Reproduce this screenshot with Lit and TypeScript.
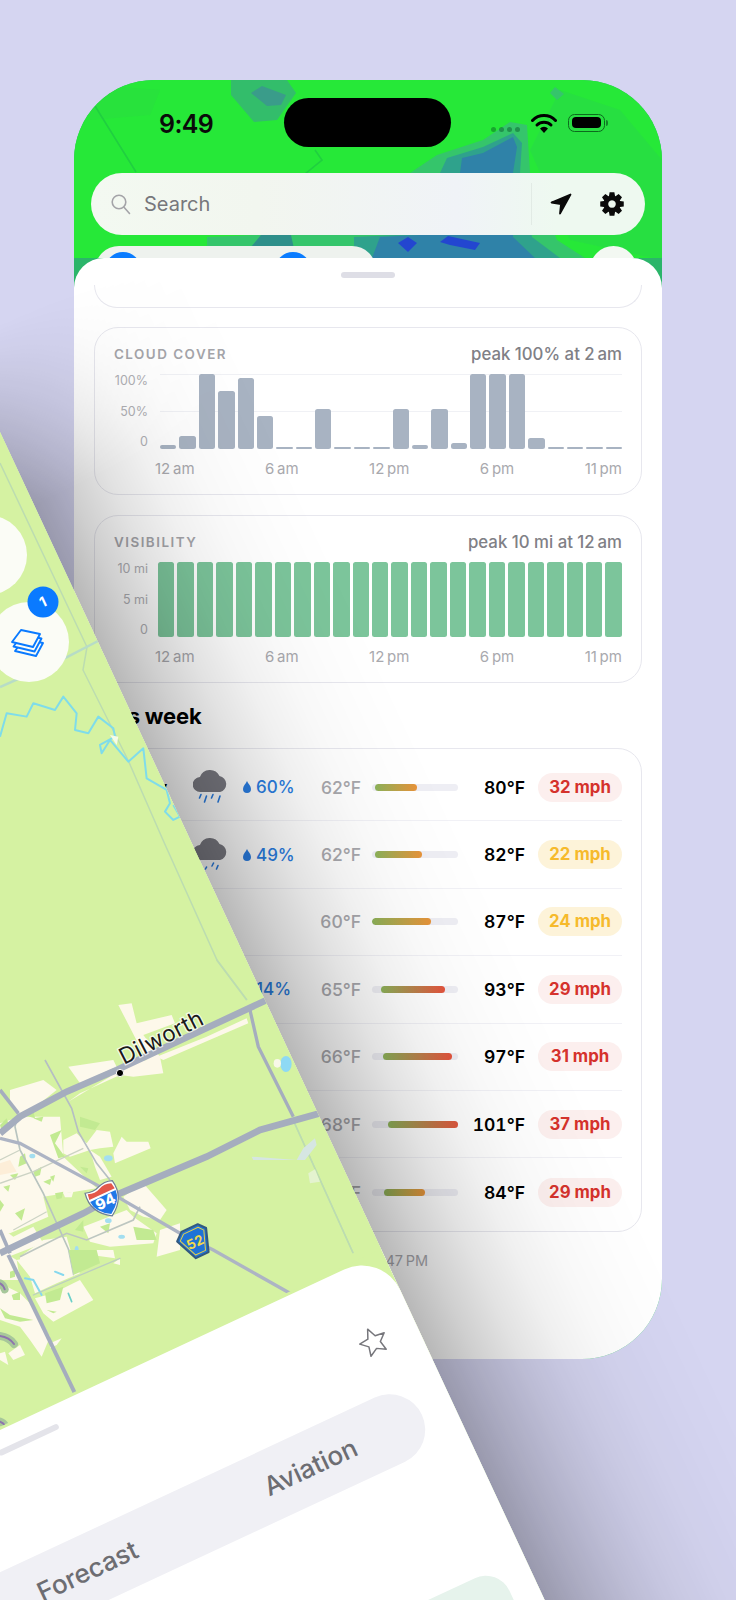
import { LitElement, html, css, svg } from "lit";
import { customElement } from "lit/decorators.js";

const cloudBars = [6, 17, 100, 78, 95, 44, 3, 3, 53, 3, 3, 3, 53, 6, 54, 8, 100, 100, 100, 15, 3, 3, 3, 3];
const week = [
  { day: "Today", rain: 4, pct: "60%", low: 62, high: 80, from: 3, to: 42, wind: 32, warn: false },
  { day: "Sat", rain: 3, pct: "49%", low: 62, high: 82, from: 3, to: 47, wind: 22, warn: true },
  { day: "Sun", rain: 0, pct: "", low: 60, high: 87, from: 0, to: 56, wind: 24, warn: true },
  { day: "Mon", rain: 2, pct: "14%", low: 65, high: 93, from: 9, to: 70, wind: 29, warn: false },
  { day: "Tue", rain: 0, pct: "", low: 66, high: 97, from: 11, to: 77, wind: 31, warn: false },
  { day: "Wed", rain: 0, pct: "", low: 68, high: 101, from: 16, to: 86, wind: 37, warn: false },
  { day: "Thu", rain: 0, pct: "", low: 65, high: 84, from: 12, to: 50, wind: 29, warn: false },
];
const hours = ["12\u202Fam", "6\u202Fam", "12\u202Fpm", "6\u202Fpm", "11\u202Fpm"];

function gearPath(): string {
  const c = 12;
  const pts: string[] = [];
  const teeth = 8;
  for (let i = 0; i < teeth; i++) {
    const a = (i / teeth) * Math.PI * 2;
    const w = 0.2;
    const p = [
      [a - 0.36, 8.6],
      [a - w, 12],
      [a + w, 12],
      [a + 0.36, 8.6],
    ];
    for (const [t, r] of p) pts.push(`${(c + Math.cos(t) * r).toFixed(2)} ${(c + Math.sin(t) * r).toFixed(2)}`);
  }
  return `M${pts.join("L")}Z M12 8.2a3.8 3.8 0 1 0 .01 0Z`;
}

const creamZ6 = [
  "355,135 395,130 410,190 515,165 525,190 430,225 480,290 490,340 400,350 360,345 240,400 205,425 330,350 345,320 440,300",
  "620,230 740,175 745,190 490,300 470,290",
];
const creamA = [
  "0,190 60,170 180,170 190,290 290,385 130,410 145,470 30,520 0,520",
  "30,90 130,60 170,90 120,130 60,170 30,130",
  "205,20 340,0 350,20 240,70",
  "190,240 230,220 260,250 290,210 330,215 340,260 300,265 270,270 210,290 190,280",
  "340,280 365,230 380,245 445,245 452,265 345,310",
  "270,270 300,290 335,350 300,360 285,320",
  "370,410 430,370 500,450 480,480 430,470 390,450",
  "250,500 380,450 400,470 470,520 460,550 330,560 270,545",
  "480,510 540,490 540,570 470,590",
  "60,590 130,540 200,530 220,600 60,600",
  "0,500 40,530 100,500 130,550 0,600",
  "190,400 220,395 215,412 195,412",
];
const greenA = [
  "45,460 75,445 65,482",
  "150,350 165,345 160,365",
  "240,320 265,325 260,340",
  "10,380 30,375 25,395",
  "225,510 250,480 250,515",
  "150,225 185,210 165,250 195,290 175,295",
  "240,170 300,190 285,210 240,200",
  "30,345 55,340 45,360",
  "130,365 155,355 150,375",
  "70,165 100,150 105,175",
  "300,500 330,490 325,520",
  "400,500 460,510 470,540 410,540",
  "60,290 75,280 80,310 55,320",
  "100,335 125,320 120,345 105,350",
  "0,195 20,175 25,190 5,215",
  "0,420 12,435 0,455",
  "165,400 190,395 185,415 170,418",
  "100,175 130,170 125,185",
];
const creamB = [
  "50,30 200,0 240,70 170,100 105,130 90,80",
  "105,145 160,130 220,100 240,90 280,150 160,215 130,190",
  "0,100 60,130 100,170 150,260 125,320 90,270 60,230 0,210",
  "25,310 60,285 75,315 40,330",
  "0,310 15,305 25,345 0,330",
  "280,0 340,0 345,25 275,15",
  "340,40 360,25 360,45",
  "150,280 185,265 170,285 150,295",
  "0,0 50,30 60,90 0,90",
];
const greenB = [
  "135,130 190,110 180,150 140,160",
  "35,135 60,125 60,150 40,150",
  "205,0 290,0 300,40 220,75",
  "0,175 30,195 100,210 60,215 15,205",
  "140,180 170,185 160,190",
  "30,65 45,60 45,80 30,85",
];
const hills = ["M0 100Q10 105 14 118", "M0 258Q28 262 42 282", "M0 515Q10 518 16 528"];

@customElement("app-root")
export class AppRoot extends LitElement {
  static styles = css`
    :host { display: block; width: 736px; height: 1600px; }
    * { box-sizing: border-box; }
    .scene {
      position: relative; width: 736px; height: 1600px; overflow: hidden;
      background: #d5d5f1; padding: 80px 0 0 74px;
      font-family: Inter, "Noto Sans", sans-serif;
    }
    .back {
      position: relative; width: 588px; height: 1279px; border-radius: 80px; overflow: hidden;
      background: #2bb56a; display: flex; flex-direction: column;
    }
    .top { position: relative; height: 178px; flex: none; overflow: hidden; background: #26e838; }
    .radar { position: absolute; left: 0; top: 0; }
    .status {
      position: relative; height: 93px; padding: 18px 0 0 85px; display: flex; align-items: flex-start;
    }
    .time { width: 125px; height: 49px; line-height: 52px; font-size: 25px; font-weight: 600; color: #0a0a0a; letter-spacing: -0.6px; }
    .island { width: 167px; height: 49px; border-radius: 25px; background: #000; flex: none; }
    .right { display: flex; align-items: center; height: 49px; margin-left: 40px; }
    .dots { display: flex; gap: 3px; width: 30px; margin-top: 13px; margin-right: 10px; }
    .dots i { width: 5px; height: 5px; border-radius: 50%; background: rgba(0, 60, 30, 0.38); }
    .wifi { margin-right: 11px; display: block; }
    .battery {
      width: 37px; height: 18px; border-radius: 6.5px; border: 1px solid #0d6a1e; padding: 2.5px 3px; display: flex; position: relative;
    }
    .battery i { flex: 1; background: #000; border-radius: 4px; }
    .battery::after {
      content: ""; position: absolute; right: -4px; top: 5px; width: 2px; height: 6px; border-radius: 0 2px 2px 0; background: rgba(0, 60, 20, 0.55);
    }
    .search {
      position: relative; margin: 0 17px; height: 62px; border-radius: 31px;
      background: linear-gradient(90deg, #f3f9f1, #f2f6ef 30%, #f0f3f7 66%, #eef9f0 84%);
      display: flex; align-items: center; padding-left: 20px;
    }
    .search .lens { margin-right: 13px; display: block; }
    .search span { flex: 1; font-size: 20px; color: #77777c; }
    .search .sep { width: 1px; height: 42px; background: rgba(0, 0, 0, 0.05); margin-right: 18px; }
    .search .nav { display: block; margin-right: 28px; }
    .search .gear { display: block; margin-right: 21px; }
    .chips { position: relative; display: flex; justify-content: space-between; margin: 11px 25px 0 21px; }
    .chip {
      width: 281px; height: 60px; border-radius: 24px; background: #eef2ee;
      display: flex; padding: 6px 0 0 10px; gap: 134px;
    }
    .chip i { width: 36px; height: 36px; border-radius: 50%; background: #0a7cff; }
    .round { width: 47px; height: 47px; border-radius: 50%; background: #f3f8f2; }

    .sheet {
      flex: 1; background: #fff; border-radius: 30px 30px 0 0; padding: 14px 20px 0;
      display: flex; flex-direction: column; position: relative;
    }
    .handle { width: 54px; height: 6px; border-radius: 3px; background: #dedee6; align-self: center; }
    .stub {
      height: 23px; margin-top: 7px; border: 1.5px solid #e7e7ee; border-top: none; border-radius: 0 0 24px 24px;
    }
    .card { border: 1.5px solid #e7e7ee; border-radius: 24px; background: transparent; }
    .metric { height: 168px; margin-top: 19px; padding: 16px 19px 0; }
    .metric + .metric { margin-top: 20px; }
    .head { display: flex; justify-content: space-between; align-items: center; height: 20px; }
    .title { font-size: 13.4px; font-weight: 600; letter-spacing: 1.5px; color: #a5a5aa; }
    .peak { font-size: 16.8px; font-weight: 500; color: #808086; }
    .plot { display: flex; height: 75px; margin-top: 10px; }
    .ylab {
      width: 34px; flex: none; display: flex; flex-direction: column; justify-content: space-between; align-items: flex-end;
      font-size: 12.5px; line-height: 14px; color: #b0b0b5;
    }
    .bars {
      flex: 1; margin-left: 12px; display: flex; align-items: flex-end; gap: 3px;
      background:
        linear-gradient(#f0f1f5, #f0f1f5) 0 0 / 100% 1px no-repeat,
        linear-gradient(#f0f1f5, #f0f1f5) 0 50% / 100% 1px no-repeat;
    }
    .bars.full { margin-left: 10px; background: none; align-items: stretch; }
    .bars i { flex: 1; background: #a8b3c2; border-radius: 2.5px; }
    .bars.full i { background: #7cc59b; }
    .xlab {
      display: flex; justify-content: space-between; margin: 10px 0 0 41px; line-height: 20px;
      font-size: 15px; color: #a9a9ae;
    }
    h2 { margin: 20px 0 0; height: 26px; line-height: 26px; font-size: 22px; font-weight: 700; color: #000; letter-spacing: -0.2px; }
    .week { margin-top: 19px; height: 484px; padding: 5px 19px; display: flex; flex-direction: column; }
    .row {
      height: 67.4px; flex: none; display: grid; align-items: center;
      grid-template-columns: 79px 35px 15px 49px 25px 44px 11px 86px 67px 13px 84px;
      border-bottom: 1px solid #f1f1f6;
    }
    .row:last-child { border-bottom: none; }
    .day { grid-column: 1; font-size: 18px; font-weight: 600; color: #000; }
    .ic { grid-column: 2; display: block; }
    .pct { grid-column: 4 / 6; justify-self: start; display: flex; align-items: center; font-size: 17px; font-weight: 500; color: #2a7ee3; gap: 5px; }
    .low { grid-column: 6; text-align: right; font-size: 17.5px; font-weight: 500; color: #a8a8ad; }
    .track { grid-column: 8; height: 7px; border-radius: 4px; background: #eeeef4; position: relative; overflow: hidden; }
    .track i { position: absolute; top: 0; bottom: 0; border-radius: 4px; }
    .high { grid-column: 9; text-align: right; font-size: 17.5px; font-weight: 600; color: #000; font-variant-numeric: tabular-nums; }
    .wind {
      grid-column: 11; height: 29px; line-height: 29px; border-radius: 15px; text-align: center;
      font-size: 16.8px; font-weight: 700; background: #fcefee; color: #d5322c;
    }
    .wind.warn { background: #fdf3d9; color: #f6ba2c; }
    .foot { margin-top: 20px; width: 334px; text-align: right; font-size: 14.5px; color: #a9a9ae; }

    .tilted {
      position: absolute; left: -419px; top: 249px; width: 800px;
      transform-origin: 100% 1000px; transform: rotate(-25deg);
      border-radius: 80px 80px 0 0; background: #d5f2a2;
    }
    .shade {
      position: absolute; left: 100%; top: 0; bottom: 0; width: 250px;
      background: linear-gradient(90deg,
        rgba(0, 0, 0, 0.28), rgba(0, 0, 0, 0.19) 16%, rgba(0, 0, 0, 0.115) 32%, rgba(0, 0, 0, 0.06) 48%,
        rgba(0, 0, 0, 0.028) 64%, rgba(0, 0, 0, 0.01) 80%, rgba(0, 0, 0, 0));
      -webkit-mask-image: linear-gradient(180deg, transparent 0, #000 180px);
      mask-image: linear-gradient(180deg, transparent 0, #000 180px);
    }
    .map { display: block; border-radius: 80px 80px 0 0; }
    .t-sheet {
      position: relative; background: #fff; border-radius: 42px 42px 0 0; height: 800px; margin-top: 3px; padding: 18px 0 0; display: flex; flex-direction: column;
    }
    .t-handle { width: 66px; height: 6px; border-radius: 3px; background: #e4e4ea; align-self: center; }
    .star-row { margin-top: 37px; padding-right: 30px; display: flex; justify-content: flex-end; }
    .star-row svg { display: block; }
    .seg {
      margin: 36px 33px 0; height: 71px; border-radius: 36px; background: #f0f0f5; display: flex; justify-content: flex-end;
    }
    .seg div {
      width: 246px; display: flex; align-items: center; justify-content: center;
      font-size: 26px; font-weight: 500; color: #6d6d72;
    }
    .mint { margin: 135px 28px 0; height: 300px; border-radius: 26px; background: #e6f3ec; }
  `;

  private radar() {
    return svg`<svg class="radar" width="588" height="178" viewBox="74 80 588 178">
      <polygon fill="#28dc46" opacity=".7" points="560,90 620,110 662,160 662,260 570,240 530,150" />
      <polygon fill="#2ade40" opacity=".6" points="90,85 160,90 150,115 90,120" />
      <path d="M95 106L136 172M300 178L322 160L315 150" fill="none" stroke="#20cf40" stroke-width="1.6" />
      <g style="filter:blur(.6px)">
        <polygon fill="#33bd6b" points="231,80 287,80 296,93 277,120 254,122 231,95" />
        <polygon fill="#3a9c8a" points="251,93 262,86 286,95 281,105 267,106" />
        <polygon fill="#35c56b" points="550,93 555,87 564,94 557,100" />
        <polygon fill="#35c56b" points="410,173 437,155 483,140 510,122 527,125 530,173 557,240 585,258 207,258 207,237 260,235" />
        <polygon fill="#2fa28c" points="440,173 447,158 483,147 513,133 522,143 520,173 532,237 560,258 354,258 354,237 440,233" />
        <polygon fill="#2f82a8" points="460,173 462,158 483,153 513,137 517,147 513,173 513,237 535,258 372,258 380,237 460,233" />
        <polygon fill="#2e8f8a" points="251,247 261,235 291,235 296,258 251,258" />
        <polygon fill="#2346d0" points="398,243 408,237 417,243 408,252" />
        <polygon fill="#2346d0" points="440,242 448,236 480,243 475,250 450,245" />
      </g>
    </svg>`;
  }

  private mapSvg() {
    const road = "#a5adbe";
    return svg`<svg class="map" width="800" height="1000" viewBox="-800 -1000 800 1000">
      <g transform="rotate(25) translate(-381 -1249)">
        <rect x="-500" y="0" width="1400" height="1700" fill="#d5f2a2" />
        <g fill="none" stroke="#bcdcb0" stroke-width="1.5">
          <path d="M0 463L87 647L83 670L128 760L163 840L217 960L247 1000" />
          <path d="M293 1120L353 1253" />
        </g>
        <path d="M100 640L67 657L0 687" fill="none" stroke="#b7dcc6" stroke-width="2.5" />
        <g transform="translate(0 420) scale(.3333)">
          <path fill="none" stroke="#7fdcea" stroke-width="6" stroke-linejoin="round"
            d="M0 950L20 880L80 890L100 850L165 870L190 830L230 880L225 930L265 940L295 890L340 925L345 950L300 975L305 1000L330 960L385 1025L430 985L440 1075L500 1110L510 1150L495 1175L520 1200L540 1190L520 1155" />
          <polygon points="330,945 355,950 350,975" fill="#f4fbe9" />
        </g>

        <g transform="translate(0 960) scale(.3333)">
          ${creamZ6.map((p) => svg`<polygon points=${p} fill="#fdf8ea" />`)}
          <polyline points="650,0 740,120" fill="none" stroke="#bcdcb0" stroke-width="4" />
          <polyline points="880,480 1060,880" fill="none" stroke="#bcdcb0" stroke-width="4" />
          <polygon points="755,590 890,600 910,565 945,535 950,555 915,600 760,600" fill="#d6e6e2" />
          <polygon points="925,640 945,628 960,665 930,670" fill="#e4f3cf" />
          <ellipse cx="858" cy="312" rx="17" ry="24" fill="#8ed9f4" />
          <ellipse cx="832" cy="310" rx="11" ry="13" fill="#f8f8e8" />
        </g>

        <g transform="translate(0 1060) scale(.3333)">
          ${creamA.map((p) => svg`<polygon points=${p} fill="#fdf9ec" />`)}
          <polygon points="0,310 30,300 50,335 0,345" fill="#fdeed8" />
          ${greenA.map((p) => svg`<polygon points=${p} fill="#c2ea92" />`)}
          <g fill="#a3def0">
            <ellipse cx="97" cy="288" rx="9" ry="7" />
            <ellipse cx="325" cy="295" rx="13" ry="9" />
            <ellipse cx="365" cy="530" rx="10" ry="6" />
            <ellipse cx="230" cy="570" rx="6" ry="12" />
            <ellipse cx="325" cy="482" rx="10" ry="7" />
          </g>
          <g fill="none">
            <polyline points="135,0 215,145 235,215 290,310 330,360" stroke="#b5bec3" stroke-width="5" />
            <polyline points="55,160 45,200 60,270 130,400 220,600" stroke="#b8c4c0" stroke-width="5" />
            <polyline points="0,370 100,335 250,265" stroke="#ccd3c4" stroke-width="4" />
            <polyline points="40,510 140,455" stroke="#ccd3c4" stroke-width="3.5" />
            <polyline points="0,300 60,270" stroke="#ccd3c4" stroke-width="3.5" />
            <polyline points="60,590 200,520 260,540 400,480 420,440" stroke="#bdc6c0" stroke-width="5" />
          </g>
        </g>

        <g transform="translate(0 1250) scale(.3333)">
          ${creamB.map((p) => svg`<polygon points=${p} fill="#fdf9ec" />`)}
          ${greenB.map((p) => svg`<polygon points=${p} fill="#c2ea92" />`)}
          <g fill="none" stroke-linecap="round">
            <path d="M75 85L100 90L125 135" stroke="#86d8ee" stroke-width="6" />
            <path d="M165 65L190 75" stroke="#86d8ee" stroke-width="6" />
            <path d="M205 130L215 155" stroke="#6ccfc8" stroke-width="5" />
            <path d="M100 135L360 25" stroke="#bccec0" stroke-width="4" />
            <path d="M205 0L220 75" stroke="#bccec0" stroke-width="3" />
            ${hills.map((d) => svg`<path d=${d} stroke="#a7c79a" stroke-width="24" />`)}
            ${hills.map((d) => svg`<path d=${d} stroke="#8d74ad" stroke-width="6" />`)}
          </g>
          <polyline points="25,15 225,430" fill="none" stroke="${road}" stroke-width="12" />
        </g>

        <g transform="translate(0 960) scale(.3333)" fill="none">
          <polyline points="0,390 55,460" stroke="${road}" stroke-width="11" />
          <polyline points="0,535 60,550 300,680 540,820 640,870 870,1000" stroke="#adb4c4" stroke-width="10" />
          <polyline points="0,810 30,880" stroke="${road}" stroke-width="11" />
          <polyline points="750,150 775,260 880,470" stroke="${road}" stroke-width="10" />
          <polyline points="0,520 60,470 200,395 350,330 800,120" stroke="${road}" stroke-width="20" />
          <polyline points="0,880 250,760 360,700 620,590 780,510 960,460" stroke="${road}" stroke-width="20" />
        </g>

        <circle cx="-13" cy="555" r="40" fill="#fbfcf6" />
        <circle cx="29" cy="642" r="40" fill="#fbfcf6" />
        <g transform="translate(28 643)" fill="#fbfcf6" stroke="#0a7aff" stroke-width="1.9" stroke-linejoin="round">
          <path transform="translate(3 9)" d="M-16 -1L-7 -13L12 -9L5 4Z" />
          <path transform="translate(1.5 4.5)" d="M-16 -1L-7 -13L12 -9L5 4Z" />
          <path d="M-16 -1L-7 -13L12 -9L5 4Z" />
        </g>
        <circle cx="43" cy="602" r="15.5" fill="#0a7aff" />
        <text x="43" y="602" transform="rotate(-25 43 602)" dy="5" text-anchor="middle" font-size="14" font-weight="700" fill="#fff">1</text>

        <circle cx="120" cy="1073" r="3.6" fill="#000" stroke="#fff" stroke-width="1" />
        <text x="124" y="1065" transform="rotate(-27 124 1065)" font-size="22.5" font-weight="400" letter-spacing=".4" fill="#1a1a1a"
          stroke="#fff" stroke-opacity=".75" stroke-width="2.5" paint-order="stroke">Dilworth</text>

        <g transform="translate(105 1200.5) rotate(-25)">
          <path d="M-15 -15Q-7 -12 0 -15Q7 -18 15 -15Q19 5 0 17Q-19 5 -15 -15Z" fill="#fff" stroke="#6f7f96" stroke-width="1.2" />
          <path d="M-13 -13Q-6 -10 0 -13Q6 -16 13 -13L14 -7L-14 -7Z" fill="#e4584a" />
          <path d="M-14 -5H14Q14 6 0 15Q-14 6 -14 -5Z" fill="#1f78e8" />
          <text y="6.5" text-anchor="middle" font-size="15" font-weight="800" fill="#fff">94</text>
        </g>
        <g transform="translate(195 1242) rotate(-25)">
          <path d="M-16 -8L-8 -15H10L16 -8L8 15H-6Z" fill="#1f73d6" stroke="#33597f" stroke-width="2" stroke-linejoin="round" />
          <path d="M-13 -7L-7 -12H9L13 -7L6 12H-5Z" fill="none" stroke="#e6cf47" stroke-width="1" stroke-linejoin="round" />
          <text y="5" text-anchor="middle" font-size="13.5" font-weight="700" fill="#f2d84a">52</text>
        </g>
      </g>
    </svg>`;
  }

  private cloud(rain: number) {
    const drops = [
      "M8 25.5L6.5 29",
      "M13.5 27L11.5 33",
      "M20 25.5L18.5 29",
      "M27 27L25 33",
    ];
    const shown = rain >= 4 ? drops : rain === 3 ? ["M13.5 30L12.5 32", "M20.5 26L19 29", "M25 28.5L23.5 32"] : drops.slice(1, 3);
    return svg`<svg class="ic" width="35" height="36" viewBox="0 0 35 36">
      <path fill="#7b7b83" d="M7.5 23a7.5 7.5 0 0 1-.6-15A10.6 10.6 0 0 1 26.5 7a8.2 8.2 0 0 1 .6 16Z" />
      <g stroke="#2a7ee3" stroke-width="1.6" stroke-linecap="round" fill="none">${shown.map((d) => svg`<path d=${d} />`)}</g>
    </svg>`;
  }

  private metric(title: string, peak: string, ylabels: string[], bars: unknown) {
    return html`<div class="card metric">
      <div class="head"><span class="title">${title}</span><span class="peak">${peak}</span></div>
      <div class="plot">
        <div class="ylab">${ylabels.map((l) => html`<span>${l}</span>`)}</div>
        ${bars}
      </div>
      <div class="xlab">${hours.map((h) => html`<span>${h}</span>`)}</div>
    </div>`;
  }

  render() {
    return html`<div class="scene">
      <div class="back">
        <div class="top">
          ${this.radar()}
          <div class="status">
            <div class="time">9:49</div>
            <div class="island"></div>
            <div class="right">
              <div class="dots"><i></i><i></i><i></i><i></i></div>
              <svg class="wifi" width="26" height="20" viewBox="0 0 26 20">
                <path d="M1.5 7.5a16 16 0 0 1 23 0" fill="none" stroke="#000" stroke-width="3" stroke-linecap="round" />
                <path d="M6 12a10 10 0 0 1 14 0" fill="none" stroke="#000" stroke-width="3" stroke-linecap="round" />
                <path d="M9 15.5a5.6 5.6 0 0 1 8 0L13 20Z" fill="#000" />
              </svg>
              <div class="battery"><i></i></div>
            </div>
          </div>
          <div class="search">
            <svg class="lens" width="20" height="21" viewBox="0 0 20 21" fill="none" stroke="#a4a4a8" stroke-width="1.6">
              <circle cx="8" cy="8" r="6.8" /><path d="M13 13.2L18.5 19.5" stroke-linecap="round" />
            </svg>
            <span>Search</span>
            <i class="sep"></i>
            <svg class="nav" width="22" height="22" viewBox="0 0 22 22">
              <path d="M20.5 1.5L1.5 9.5L11 11.2L10 20.5Z" fill="#0a0a0a" stroke="#0a0a0a" stroke-width="1.8" stroke-linejoin="round" />
            </svg>
            <svg class="gear" width="24" height="24" viewBox="0 0 24 24"><path fill-rule="evenodd" fill="#0a0a0a" d=${gearPath()} /></svg>
          </div>
          <div class="chips">
            <div class="chip"><i></i><i></i></div>
            <div class="round"></div>
          </div>
        </div>
        <div class="sheet">
          <div class="handle"></div>
          <div class="stub"></div>
          ${this.metric(
            "CLOUD COVER",
            "peak 100% at 2\u202Fam",
            ["100%", "50%", "0"],
            html`<div class="bars">${cloudBars.map((v) => html`<i style="height:${v}%"></i>`)}</div>`
          )}
          ${this.metric(
            "VISIBILITY",
            "peak 10 mi at 12\u202Fam",
            ["10 mi", "5 mi", "0"],
            html`<div class="bars full">${Array.from({ length: 24 }, () => html`<i></i>`)}</div>`
          )}
          <h2>This week</h2>
          <div class="card week">
            ${week.map((d) => {
              const mix = d.to > 60 ? "#e5533d" : "#e8933a";
              return html`<div class="row">
                <div class="day">${d.day}</div>
                ${d.rain ? this.cloud(d.rain) : ""}
                ${d.pct
                  ? html`<div class="pct">
                      <svg width="8" height="12" viewBox="0 0 8 12"><path fill="#2a7ee3" d="M4 0C5 2.5 8 5 8 8A4 4 0 0 1 0 8C0 5 3 2.5 4 0Z" /></svg>
                      ${d.pct}
                    </div>`
                  : ""}
                <div class="low">${d.low}°F</div>
                <div class="track">
                  <i style="left:${d.from}px;width:${d.to - d.from + 3}px;background:linear-gradient(90deg,#8db35a,${mix})"></i>
                </div>
                <div class="high">${d.high}°F</div>
                <div class="wind ${d.warn ? "warn" : ""}">${d.wind} mph</div>
              </div>`;
            })}
          </div>
          <div class="foot">Updated 9:47\u202FPM</div>
        </div>
      </div>

      <div class="tilted">
        <div class="shade"></div>
        ${this.mapSvg()}
        <div class="t-sheet">
          <div class="t-handle"></div>
          <div class="star-row">
            <svg width="32" height="32" viewBox="0 0 32 32">
              <path d="M16 3L20 12.2L29.5 13.2L22.3 19.6L24.4 29L16 24.2L7.6 29L9.7 19.6L2.5 13.2L12 12.2Z" fill="none" stroke="#77777c" stroke-width="1.5" stroke-linejoin="round" />
            </svg>
          </div>
          <div class="seg"><div>Forecast</div><div>Aviation</div></div>
          <div class="mint"></div>
        </div>
      </div>
    </div>`;
  }
}
